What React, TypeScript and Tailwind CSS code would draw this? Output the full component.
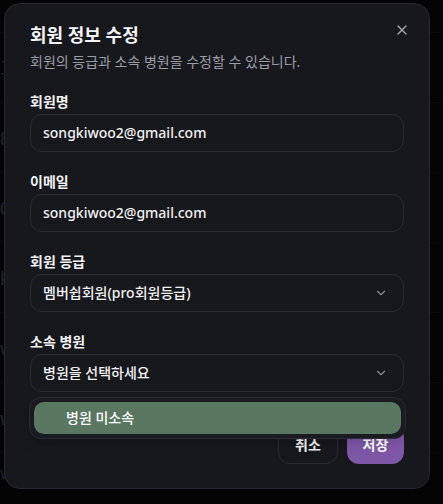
import React from 'react';

const font = { fontFamily: '"Noto Sans", "Noto Sans CJK KR", sans-serif' };

const ChevronDown: React.FC = () => (
  <svg width="14" height="14" viewBox="0 0 24 24" fill="none" stroke="currentColor" strokeWidth="2" strokeLinecap="round" strokeLinejoin="round">
    <path d="m6 9 6 6 6-6" />
  </svg>
);

const Field: React.FC<{ label: string; children: React.ReactNode }> = ({ label, children }) => (
  <div className="flex flex-col">
    <label className="h-5 text-sm font-bold leading-5 text-[#f2f2f4]">{label}</label>
    <div className="mt-[2px]">{children}</div>
  </div>
);

const TextInput: React.FC<{ value: string }> = ({ value }) => (
  <div className="flex h-[38px] items-center rounded-xl border border-[#2a2b33] px-3 text-sm font-medium text-[#f2f2f4]">
    {value}
  </div>
);

const SelectBox: React.FC<{ value: string }> = ({ value }) => (
  <div className="flex h-[38px] items-center justify-between rounded-xl border border-[#2a2b33] pl-3 pr-[15px] text-sm font-medium text-[#f2f2f4]">
    <span>{value}</span>
    <span className="text-[#8a8b93]">
      <ChevronDown />
    </span>
  </div>
);

// 배경 테이블 (오버레이 아래)
const BackgroundRows: React.FC = () => {
  const rows = ['교', '8', '0', 'k', 'w', 'w'];
  return (
    <div className="flex flex-col">
      <div className="h-[33px] border-b border-[#1c1d22]" />
      {rows.map((c, i) => (
        <div key={i} className="flex h-[70px] items-center border-b border-[#1c1d22] text-lg text-[#55586a]">
          {c}
        </div>
      ))}
      <div className="flex h-[40px] items-center">
        <span className="w-[252px] text-[17px] text-[#55586a]">wer4@gmail.com</span>
        <span className="rounded-md bg-[#2e3140] px-4 text-xs text-[#55586a]">일반회원</span>
      </div>
    </div>
  );
};

export default function App() {
  return (
    <div className="relative h-[504px] w-[443px] overflow-hidden bg-[#0b0b0e]" style={font}>
      <BackgroundRows />
      <div className="absolute inset-0 bg-black/60" />

      <div className="absolute left-[4px] top-[3px] flex h-[486px] w-[426px] flex-col rounded-2xl border border-[#262730] bg-[#17181c] px-[25px] pt-[17px]">
        <button className="absolute right-[19px] top-[18px] text-[#a3a4ac]">
          <svg width="16" height="16" viewBox="0 0 24 24" fill="none" stroke="currentColor" strokeWidth="2" strokeLinecap="round">
            <path d="M18 6 6 18" />
            <path d="m6 6 12 12" />
          </svg>
        </button>

        <h2 className="text-lg font-bold leading-7 text-[#f4f4f6]">회원 정보 수정</h2>
        <p className="mt-[3px] text-sm leading-5 text-[#9c9da6]">회원의 등급과 소속 병원을 수정할 수 있습니다.</p>

        <div className="mt-[20px] flex flex-col gap-[20px]">
          <Field label="회원명">
            <TextInput value="songkiwoo2@gmail.com" />
          </Field>
          <Field label="이메일">
            <TextInput value="songkiwoo2@gmail.com" />
          </Field>
          <Field label="회원 등급">
            <SelectBox value="멤버쉽회원(pro회원등급)" />
          </Field>
          <div className="relative">
            <Field label="소속 병원">
              <SelectBox value="병원을 선택하세요" />
            </Field>
            <div className="absolute left-[-1px] right-[-2px] top-[65px] z-10 rounded-xl border border-[#2a2b33] bg-[#1a1b20] p-1 shadow-lg">
              <div className="flex h-8 items-center rounded-[10px] bg-[#5a7762] pl-8 text-sm font-medium text-white">
                병원 미소속
              </div>
            </div>
          </div>
        </div>

        <div className="mt-[34px] flex justify-end gap-[9px]">
          <button className="h-[38px] w-[60px] rounded-xl border border-[#2a2b33] text-sm font-bold text-[#f2f2f4]">취소</button>
          <button className="h-[38px] w-[57px] rounded-xl bg-[#7f58a8] text-sm font-bold text-white">저장</button>
        </div>
      </div>
    </div>
  );
}
